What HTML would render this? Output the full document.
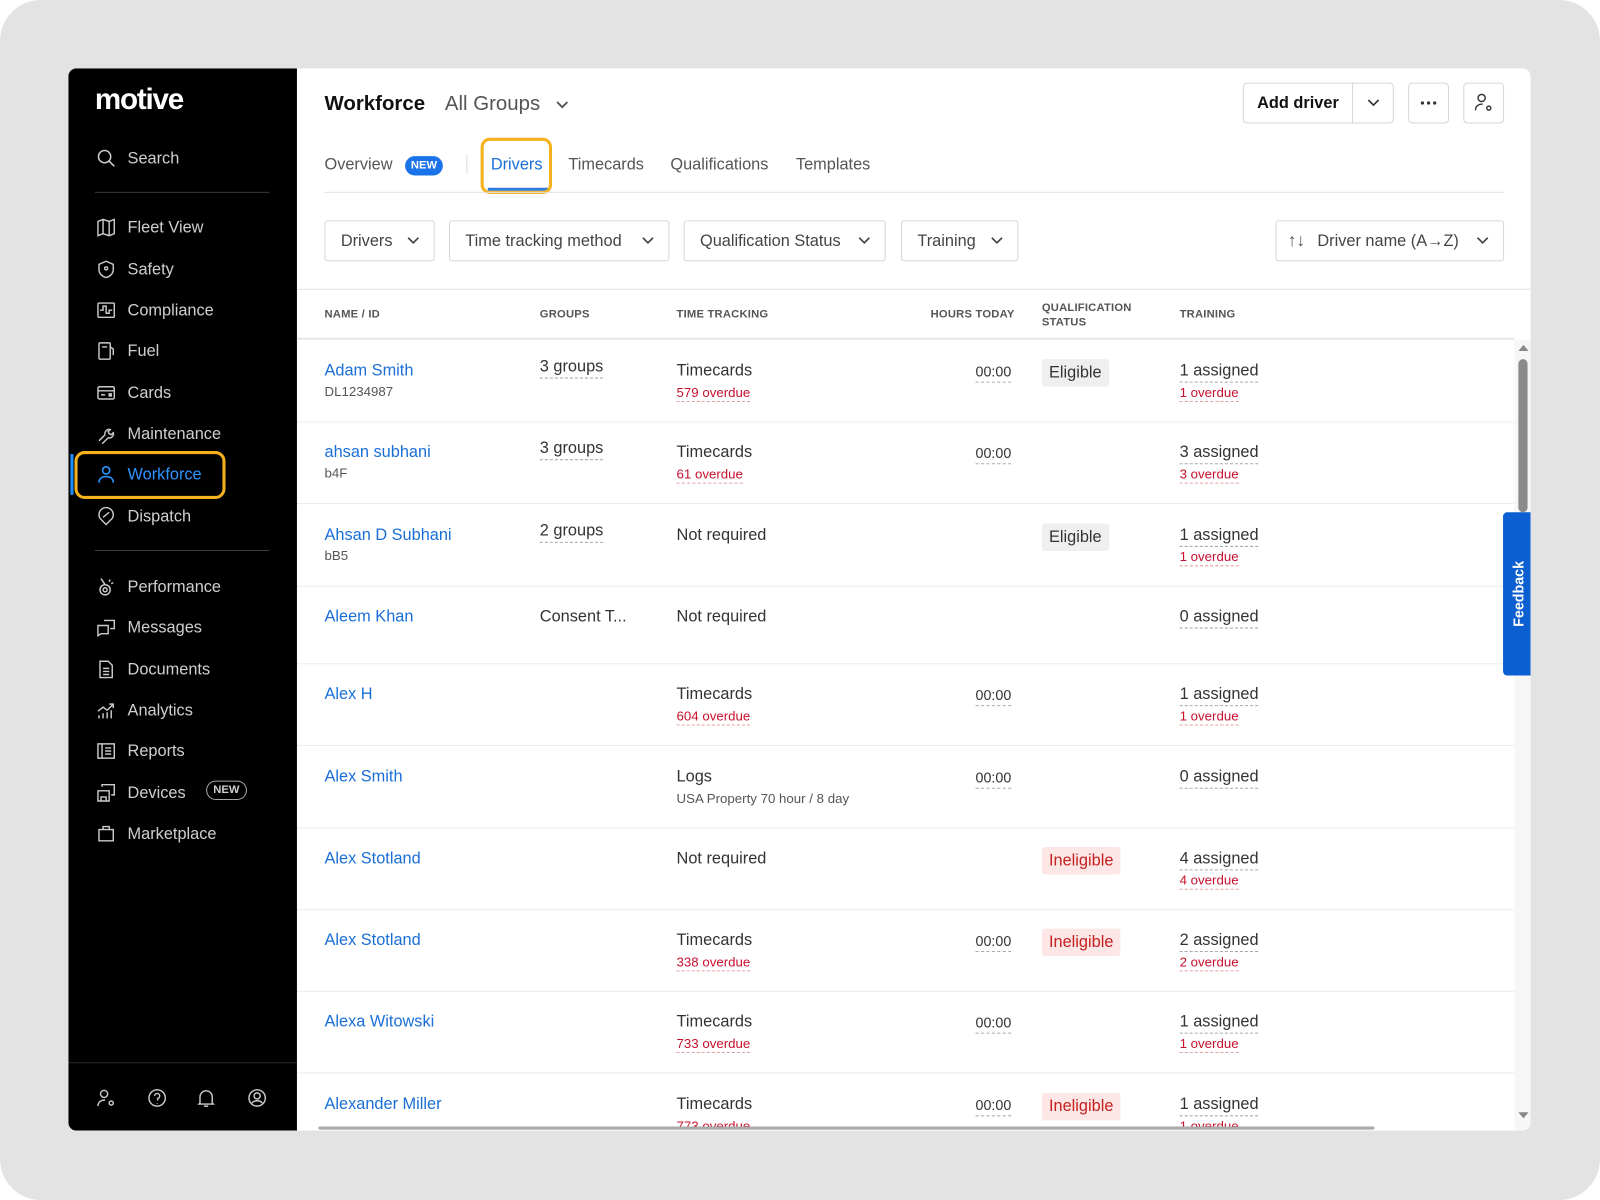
<!DOCTYPE html>
<html><head><meta charset="utf-8">
<style>
*{box-sizing:border-box;margin:0;padding:0}
html,body{width:1600px;height:1200px;overflow:hidden;background:#fff;font-family:"Liberation Sans",Arial,sans-serif}
#s{position:absolute;left:0;top:0;width:1568px;height:1176px;transform:scale(1.020408);transform-origin:0 0;background:#e3e3e3;border-radius:40px;overflow:hidden}
.a{position:absolute;white-space:nowrap}
#panel{position:absolute;left:67px;top:67px;width:1433px;height:1041px;background:#fff;border-radius:8px;overflow:hidden}
#side{position:absolute;left:0;top:0;width:224px;height:1041px;background:#000}
.nav{position:absolute;left:27px;color:#cfcfcf;font-size:16px;height:20px;line-height:20px;white-space:nowrap;width:190px}
.nav svg{position:absolute;left:0;top:0;width:20px;height:20px}
.nav span{position:absolute;left:31px;top:1px;white-space:nowrap}
.sep{position:absolute;left:26px;width:171px;height:1px;background:#3a3a3a}
.btn{position:absolute;border:1px solid #d6d6d6;border-radius:4px;background:#fff}
.flt{position:absolute;top:149px;height:40px;border:1px solid #d6d6d6;border-radius:3px;color:#444;font-size:16px;line-height:39px;padding-left:15px;white-space:nowrap}
.flt svg{position:absolute;right:14px;top:15px}
.th{position:absolute;font-size:11px;font-weight:bold;color:#555;letter-spacing:.2px;line-height:14px}
.row{position:absolute;left:0;width:1193px;height:81px;border-bottom:1px solid #ececec}
.c{position:absolute;font-size:16px;line-height:20px;color:#333;white-space:nowrap}
.nm{color:#1a6fd6}
.sub{position:absolute;font-size:13px;line-height:16px;color:#555;white-space:nowrap}
.red{color:#c8102e;border-bottom:1px dashed #e4a0a0}
.dot{border-bottom:1px dashed #aaa}
.bdg{position:absolute;font-size:16px;line-height:27px;padding:0 7px;border-radius:3px;background:#efefef;color:#333}
.bad{background:#fde6e6;color:#c62020}
</style></head><body>
<div id="s">
<div id="panel">
 <div id="side">
  <div class="a" style="left:26px;top:15px;color:#fff;font-size:29px;font-weight:bold;letter-spacing:-1.2px">motive</div>
  <div class="nav" style="top:78px"><svg viewBox="0 0 20 20" fill="none" stroke="#ccc" stroke-width="1.5"><circle cx="8.5" cy="8.5" r="6"/><path d="M13 13l5 5"/></svg><span>Search</span></div>
  <div class="sep" style="top:121px"></div>
  <div class="nav" style="top:146px"><svg viewBox="0 0 20 20" fill="none" stroke="#ccc" stroke-width="1.4"><path d="M2 4l5-2 6 2 5-2v14l-5 2-6-2-5 2z M7 2v14 M13 4v14"/></svg><span>Fleet View</span></div>
  <div class="nav" style="top:187px"><svg viewBox="0 0 20 20" fill="none" stroke="#ccc" stroke-width="1.4"><path d="M10 2l7 3v5c0 4-3 7-7 8-4-1-7-4-7-8V5z"/><circle cx="10" cy="9" r="1.5"/></svg><span>Safety</span></div>
  <div class="nav" style="top:227px"><svg viewBox="0 0 20 20" fill="none" stroke="#ccc" stroke-width="1.4"><rect x="2" y="3" width="16" height="14" rx="1"/><path d="M4 10h3v-4h3v7h3v-3h3"/></svg><span>Compliance</span></div>
  <div class="nav" style="top:267px"><svg viewBox="0 0 20 20" fill="none" stroke="#ccc" stroke-width="1.4"><rect x="3" y="2" width="11" height="16" rx="1"/><path d="M6 6h5 M14 6l3 2v6"/></svg><span>Fuel</span></div>
  <div class="nav" style="top:308px"><svg viewBox="0 0 20 20" fill="none" stroke="#ccc" stroke-width="1.4"><rect x="2" y="4" width="16" height="12" rx="1.5"/><path d="M2 8h16 M5 12h4"/><rect x="13" y="11" width="2" height="2" fill="#ccc"/></svg><span>Cards</span></div>
  <div class="nav" style="top:348px"><svg viewBox="0 0 20 20" fill="none" stroke="#ccc" stroke-width="1.4"><path d="M3 17l6-6 M9 11c-1-3 2-6 5-5l-2 2 1 2 2 1 2-2c1 3-2 6-5 5l-6 6"/></svg><span>Maintenance</span></div>
  <div class="a" style="left:2px;top:378px;width:3px;height:40px;background:#1f8fff"></div>
  <div class="nav" style="top:388px;color:#2e95ff"><svg viewBox="0 0 20 20" fill="none" stroke="#2e95ff" stroke-width="1.6"><circle cx="10" cy="6" r="3.5"/><path d="M3 18c0-4 3-6 7-6s7 2 7 6"/></svg><span>Workforce</span></div>
  <div class="a" style="left:6px;top:375px;width:148px;height:47px;border:3px solid #f5b21c;border-radius:10px"></div>
  <div class="nav" style="top:429px"><svg viewBox="0 0 20 20" fill="none" stroke="#ccc" stroke-width="1.4"><path d="M10 18l-6-6a7 7 0 1 1 12 0z M7 11l6-5"/></svg><span>Dispatch</span></div>
  <div class="sep" style="top:472px"></div>
  <div class="nav" style="top:498px"><svg viewBox="0 0 20 20" fill="none" stroke="#ccc" stroke-width="1.4"><circle cx="9" cy="13" r="5"/><circle cx="9" cy="13" r="2"/><path d="M5 2l4 6 M14 3l-1 2 M17 6l-2 1"/></svg><span>Performance</span></div>
  <div class="nav" style="top:538px"><svg viewBox="0 0 20 20" fill="none" stroke="#ccc" stroke-width="1.4"><path d="M8 3h10v8h-4 M2 8h10v8H5l-3 2z"/></svg><span>Messages</span></div>
  <div class="nav" style="top:579px"><svg viewBox="0 0 20 20" fill="none" stroke="#ccc" stroke-width="1.4"><path d="M4 2h8l4 4v12H4z M7 9h6 M7 12h6 M7 15h6"/></svg><span>Documents</span></div>
  <div class="nav" style="top:619px"><svg viewBox="0 0 20 20" fill="none" stroke="#ccc" stroke-width="1.4"><path d="M3 18v-3 M7 18v-5 M11 18v-6 M15 18v-8 M2 11l5-4 4 3 6-6 M13 4h4v4"/></svg><span>Analytics</span></div>
  <div class="nav" style="top:659px"><svg viewBox="0 0 20 20" fill="none" stroke="#ccc" stroke-width="1.4"><rect x="2" y="3" width="16" height="14"/><path d="M6 3v14 M9 7h6 M9 10h6 M9 13h6"/></svg><span>Reports</span></div>
  <div class="nav" style="top:700px"><svg viewBox="0 0 20 20" fill="none" stroke="#ccc" stroke-width="1.4"><path d="M6 4V2h12v10h-3 M2 8h11v10H2z M5 18v-4h5v4"/></svg><span>Devices</span><span style="left:108px;top:-2px;font-size:11px;font-weight:bold;border:1px solid #aaa;border-radius:10px;padding:0 6px;line-height:17px;height:19px">NEW</span></div>
  <div class="nav" style="top:740px"><svg viewBox="0 0 20 20" fill="none" stroke="#ccc" stroke-width="1.4"><path d="M3 6h14v11H3z M7 6V3h6v3"/></svg><span>Marketplace</span></div>
  <div class="a" style="left:0;top:974px;width:224px;height:1px;background:#2a2a2a"></div>
  <svg class="a" style="left:27px;top:999px" width="20" height="20" viewBox="0 0 20 20" fill="none" stroke="#ccc" stroke-width="1.4"><circle cx="8" cy="6" r="3.5"/><path d="M2 18c0-4 3-6 7-6"/><circle cx="15" cy="15" r="2"/></svg>
  <svg class="a" style="left:77px;top:999px" width="20" height="20" viewBox="0 0 20 20" fill="none" stroke="#ccc" stroke-width="1.4"><circle cx="10" cy="10" r="8"/><path d="M7.5 8a2.5 2.5 0 1 1 3 2.5v2 M10 15v.5"/></svg>
  <svg class="a" style="left:125px;top:999px" width="20" height="20" viewBox="0 0 20 20" fill="none" stroke="#ccc" stroke-width="1.4"><path d="M4 15V9a6 6 0 0 1 12 0v6l1 1H3z M8 18h4"/></svg>
  <svg class="a" style="left:175px;top:999px" width="20" height="20" viewBox="0 0 20 20" fill="none" stroke="#ccc" stroke-width="1.4"><circle cx="10" cy="10" r="8"/><circle cx="10" cy="8" r="3"/><path d="M5 15c2-3 8-3 10 0"/></svg>
 </div>
 <div class="a" style="left:251px;top:24px;font-size:20px;font-weight:bold;color:#111">Workforce</div>
 <div class="a" style="left:369px;top:24px;font-size:20px;color:#555">All Groups</div>
 <svg class="a" style="left:477px;top:31px" width="14" height="10" viewBox="0 0 14 10" fill="none" stroke="#555" stroke-width="1.8"><path d="M2 2l5 5 5-5"/></svg>
 <div class="btn" style="left:1151px;top:14px;width:148px;height:40px"></div>
 <div class="a" style="left:1258px;top:14px;width:1px;height:40px;background:#d6d6d6"></div>
 <div class="a" style="left:1165px;top:26px;font-size:16px;font-weight:bold;color:#111">Add driver</div>
 <svg class="a" style="left:1273px;top:30px" width="12" height="8" viewBox="0 0 12 8" fill="none" stroke="#333" stroke-width="1.6"><path d="M1 1l5 5 5-5"/></svg>
 <div class="btn" style="left:1313px;top:14px;width:40px;height:40px"></div>
 <svg class="a" style="left:1323px;top:32px" width="20" height="4" viewBox="0 0 20 4" fill="#333"><circle cx="4" cy="2" r="1.6"/><circle cx="10" cy="2" r="1.6"/><circle cx="16" cy="2" r="1.6"/></svg>
 <div class="btn" style="left:1367px;top:14px;width:40px;height:40px"></div>
 <svg class="a" style="left:1377px;top:24px" width="20" height="20" viewBox="0 0 20 20" fill="none" stroke="#333" stroke-width="1.4"><circle cx="8" cy="5" r="3.5"/><path d="M2 17c0-4 3-6 7-6"/><circle cx="15" cy="15" r="2"/></svg>
 <div class="a" style="left:251px;top:86px;font-size:16px;color:#555">Overview</div>
 <div class="a" style="left:330px;top:86px;width:37px;height:19px;background:#1a73e8;color:#fff;border-radius:10px;font-size:11px;font-weight:bold;text-align:center;line-height:19px">NEW</div>
 <div class="a" style="left:390px;top:84px;width:1px;height:20px;background:#ddd"></div>
 <div class="a" style="left:414px;top:86px;font-size:16px;color:#1a6fd6">Drivers</div>
 <div class="a" style="left:411px;top:117px;width:59px;height:3px;background:#2e7be0"></div>
 <div class="a" style="left:404px;top:68px;width:70px;height:55px;border:3px solid #f5b21c;border-radius:9px"></div>
 <div class="a" style="left:490px;top:86px;font-size:16px;color:#555">Timecards</div>
 <div class="a" style="left:590px;top:86px;font-size:16px;color:#555">Qualifications</div>
 <div class="a" style="left:713px;top:86px;font-size:16px;color:#555">Templates</div>
 <div class="a" style="left:251px;top:121px;width:1156px;height:1px;background:#e2e2e2"></div>
 <div class="flt" style="left:251px;width:108px">Drivers<svg width="12" height="8" viewBox="0 0 12 8" fill="none" stroke="#444" stroke-width="1.6"><path d="M1 1l5 5 5-5"/></svg></div>
 <div class="flt" style="left:373px;width:216px">Time tracking method<svg width="12" height="8" viewBox="0 0 12 8" fill="none" stroke="#444" stroke-width="1.6"><path d="M1 1l5 5 5-5"/></svg></div>
 <div class="flt" style="left:603px;width:198px">Qualification Status<svg width="12" height="8" viewBox="0 0 12 8" fill="none" stroke="#444" stroke-width="1.6"><path d="M1 1l5 5 5-5"/></svg></div>
 <div class="flt" style="left:816px;width:115px">Training<svg width="12" height="8" viewBox="0 0 12 8" fill="none" stroke="#444" stroke-width="1.6"><path d="M1 1l5 5 5-5"/></svg></div>
 <div class="flt" style="left:1183px;width:224px;padding-left:40px">Driver name (A→Z)<svg width="12" height="8" viewBox="0 0 12 8" fill="none" stroke="#444" stroke-width="1.6"><path d="M1 1l5 5 5-5"/></svg></div>
 <div class="a" style="left:1195px;top:159px;font-size:17px;color:#555">↑↓</div>
 <div class="a" style="left:224px;top:216px;width:1209px;height:1px;background:#e2e2e2"></div>
 <div class="th" style="left:251px;top:234px">NAME / ID</div>
 <div class="th" style="left:462px;top:234px">GROUPS</div>
 <div class="th" style="left:596px;top:234px">TIME TRACKING</div>
 <div class="th" style="left:845px;top:234px">HOURS TODAY</div>
 <div class="th" style="left:954px;top:228px">QUALIFICATION<br>STATUS</div>
 <div class="th" style="left:1089px;top:234px">TRAINING</div>
 <div class="a" style="left:224px;top:264px;width:1193px;height:2px;background:#e6e6e6"></div>
 <div class="a" style="left:224px;top:266px;width:1193px;height:771px;overflow:hidden">
  <div class="row" style="top:0">
   <div class="c nm" style="left:27px;top:21px">Adam Smith</div><div class="sub" style="left:27px;top:43px">DL1234987</div>
   <div class="c dot" style="left:238px;top:17px">3 groups</div>
   <div class="c" style="left:372px;top:21px">Timecards</div><div class="sub red" style="left:372px;top:44px">579 overdue</div>
   <div class="c dot" style="left:665px;top:21px;font-size:14px">00:00</div>
   <div class="bdg" style="left:730px;top:19px">Eligible</div>
   <div class="c dot" style="left:865px;top:21px">1 assigned</div><div class="sub red" style="left:865px;top:44px">1 overdue</div>
  </div>
  <div class="row" style="top:80px">
   <div class="c nm" style="left:27px;top:21px">ahsan subhani</div><div class="sub" style="left:27px;top:43px">b4F</div>
   <div class="c dot" style="left:238px;top:17px">3 groups</div>
   <div class="c" style="left:372px;top:21px">Timecards</div><div class="sub red" style="left:372px;top:44px">61 overdue</div>
   <div class="c dot" style="left:665px;top:21px;font-size:14px">00:00</div>
   <div class="c dot" style="left:865px;top:21px">3 assigned</div><div class="sub red" style="left:865px;top:44px">3 overdue</div>
  </div>
  <div class="row" style="top:161px">
   <div class="c nm" style="left:27px;top:21px">Ahsan D Subhani</div><div class="sub" style="left:27px;top:43px">bB5</div>
   <div class="c dot" style="left:238px;top:17px">2 groups</div>
   <div class="c" style="left:372px;top:21px">Not required</div>
   <div class="bdg" style="left:730px;top:19px">Eligible</div>
   <div class="c dot" style="left:865px;top:21px">1 assigned</div><div class="sub red" style="left:865px;top:44px">1 overdue</div>
  </div>
  <div class="row" style="top:241px;height:77px">
   <div class="c nm" style="left:27px;top:21px">Aleem Khan</div>
   <div class="c" style="left:238px;top:21px">Consent T...</div>
   <div class="c" style="left:372px;top:21px">Not required</div>
   <div class="c dot" style="left:865px;top:21px">0 assigned</div>
  </div>
  <div class="row" style="top:317px">
   <div class="c nm" style="left:27px;top:21px">Alex H</div>
   <div class="c" style="left:372px;top:21px">Timecards</div><div class="sub red" style="left:372px;top:44px">604 overdue</div>
   <div class="c dot" style="left:665px;top:21px;font-size:14px">00:00</div>
   <div class="c dot" style="left:865px;top:21px">1 assigned</div><div class="sub red" style="left:865px;top:44px">1 overdue</div>
  </div>
  <div class="row" style="top:398px">
   <div class="c nm" style="left:27px;top:21px">Alex Smith</div>
   <div class="c" style="left:372px;top:21px">Logs</div><div class="sub" style="left:372px;top:44px">USA Property 70 hour / 8 day</div>
   <div class="c dot" style="left:665px;top:21px;font-size:14px">00:00</div>
   <div class="c dot" style="left:865px;top:21px">0 assigned</div>
  </div>
  <div class="row" style="top:478px">
   <div class="c nm" style="left:27px;top:21px">Alex Stotland</div>
   <div class="c" style="left:372px;top:21px">Not required</div>
   <div class="bdg bad" style="left:730px;top:19px">Ineligible</div>
   <div class="c dot" style="left:865px;top:21px">4 assigned</div><div class="sub red" style="left:865px;top:44px">4 overdue</div>
  </div>
  <div class="row" style="top:558px">
   <div class="c nm" style="left:27px;top:21px">Alex Stotland</div>
   <div class="c" style="left:372px;top:21px">Timecards</div><div class="sub red" style="left:372px;top:44px">338 overdue</div>
   <div class="c dot" style="left:665px;top:21px;font-size:14px">00:00</div>
   <div class="bdg bad" style="left:730px;top:19px">Ineligible</div>
   <div class="c dot" style="left:865px;top:21px">2 assigned</div><div class="sub red" style="left:865px;top:44px">2 overdue</div>
  </div>
  <div class="row" style="top:638px">
   <div class="c nm" style="left:27px;top:21px">Alexa Witowski</div>
   <div class="c" style="left:372px;top:21px">Timecards</div><div class="sub red" style="left:372px;top:44px">733 overdue</div>
   <div class="c dot" style="left:665px;top:21px;font-size:14px">00:00</div>
   <div class="c dot" style="left:865px;top:21px">1 assigned</div><div class="sub red" style="left:865px;top:44px">1 overdue</div>
  </div>
  <div class="row" style="top:719px">
   <div class="c nm" style="left:27px;top:21px">Alexander Miller</div>
   <div class="c" style="left:372px;top:21px">Timecards</div><div class="sub red" style="left:372px;top:44px">773 overdue</div>
   <div class="c dot" style="left:665px;top:21px;font-size:14px">00:00</div>
   <div class="bdg bad" style="left:730px;top:19px">Ineligible</div>
   <div class="c dot" style="left:865px;top:21px">1 assigned</div><div class="sub red" style="left:865px;top:44px">1 overdue</div>
  </div>
 </div>
 <div class="a" style="left:1417px;top:266px;width:16px;height:775px;background:#f7f7f7"></div>
 <div class="a" style="left:1421px;top:271px;width:0;height:0;border-left:5px solid transparent;border-right:5px solid transparent;border-bottom:6px solid #888"></div>
 <div class="a" style="left:1421px;top:285px;width:9px;height:150px;background:#8a8a8a;border-radius:5px"></div>
 <div class="a" style="left:1421px;top:1023px;width:0;height:0;border-left:5px solid transparent;border-right:5px solid transparent;border-top:6px solid #888"></div>
 <div class="a" style="left:245px;top:1037px;width:1035px;height:3px;background:#aaa;border-radius:2px"></div>
 <div class="a" style="left:1406px;top:435px;width:27px;height:160px;background:#0b5fd0;border-radius:4px 0 0 4px"></div>
 <div class="a" style="left:1381px;top:506px;width:80px;height:18px;transform:rotate(-90deg);color:#fff;font-size:14px;font-weight:bold;text-align:center;line-height:18px">Feedback</div>
</div>
</div>
</body></html>
